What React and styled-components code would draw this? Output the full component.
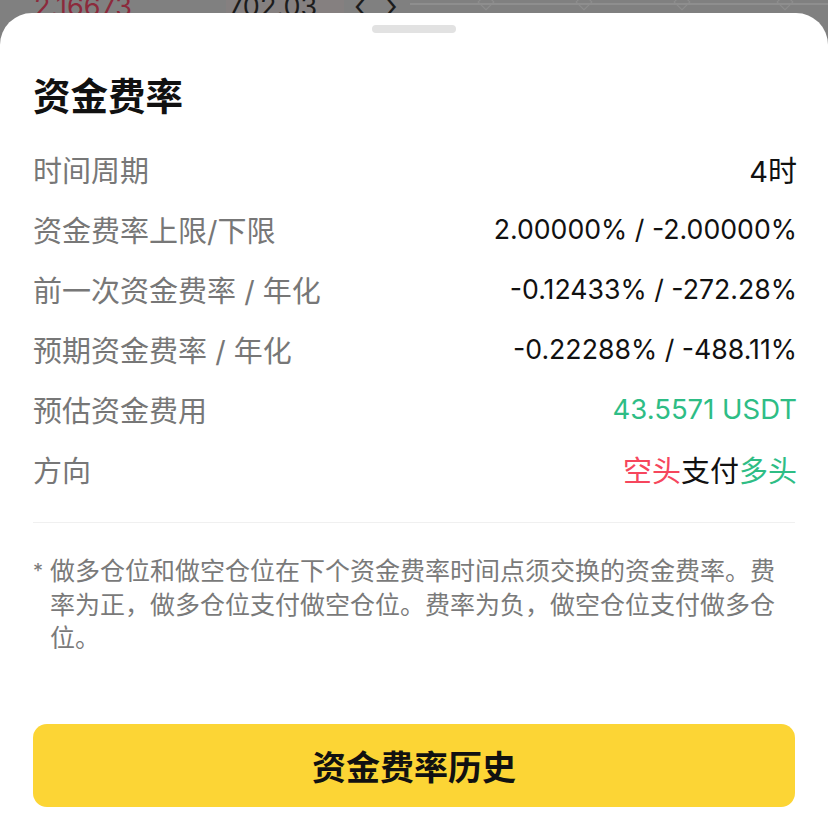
import styled, { createGlobalStyle } from "styled-components";

const GlobalStyle = createGlobalStyle`
  html, body {
    margin: 0;
    padding: 0;
    background: #808080;
  }
  body {
    font-family: Inter, "Noto Sans CJK SC", "Noto Sans", sans-serif;
    -webkit-font-smoothing: antialiased;
  }
`;

const rows = [
  { label: "时间周期", value: "4时", size: 29 },
  { label: "资金费率上限/下限", value: "2.00000% / -2.00000%" },
  { label: "前一次资金费率 / 年化", value: "-0.12433% / -272.28%" },
  { label: "预期资金费率 / 年化", value: "-0.22288% / -488.11%" },
  { label: "预估资金费用", value: "43.5571 USDT", tone: "green", size: 27.5 },
];

const toneColor = {
  green: "#2ebd85",
  red: "#f6465d",
  default: "#111111",
};

export default function App() {
  return (
    <>
      <GlobalStyle />
      <Screen>
        <Backdrop>
          <BackCell $w={226} $tone="red">2.16673</BackCell>
          <BackCell $w={118} $shade>702.03</BackCell>
          <Chevrons>‹ ›</Chevrons>
          <Track>
            {[476, 574, 672, 775].map((x) => (
              <Diamond key={x} style={{ left: x - 400 }} />
            ))}
          </Track>
        </Backdrop>

        <Sheet>
          <Handle />
          <Title>资金费率</Title>

          <Rows>
            {rows.map((r) => (
              <Row key={r.label}>
                <Label>{r.label}</Label>
                <Value $tone={r.tone} $size={r.size}>
                  {r.value}
                </Value>
              </Row>
            ))}
            <Row>
              <Label>方向</Label>
              <Value $size={29}>
                <Part $tone="red">空头</Part>
                支付
                <Part $tone="green">多头</Part>
              </Value>
            </Row>
          </Rows>

          <Divider />

          <Note>
            <Star>*</Star>
            <NoteText>
              做多仓位和做空仓位在下个资金费率时间点须交换的资金费率。费率为正，做多仓位支付做空仓位。费率为负，做空仓位支付做多仓位。
            </NoteText>
          </Note>

          <HistoryButton>资金费率历史</HistoryButton>
        </Sheet>
      </Screen>
    </>
  );
}

const Screen = styled.div`
  width: 828px;
  height: 828px;
  overflow: hidden;
  display: flex;
  flex-direction: column;
`;

const Backdrop = styled.div`
  height: 13px;
  flex-shrink: 0;
  display: flex;
  align-items: flex-end;
  overflow: hidden;
  background: #808080;
`;

const BackCell = styled.div`
  width: ${({ $w }) => $w}px;
  height: 13px;
  flex-shrink: 0;
  box-sizing: border-box;
  padding-left: ${({ $shade }) => ($shade ? 2 : 34)}px;
  background: ${({ $shade }) => ($shade ? "#858080" : "transparent")};
  color: ${({ $tone }) => ($tone === "red" ? "#8c2a3c" : "#1c1c1c")};
  font-size: 27px;
  line-height: 13px;
  display: flex;
  align-items: flex-end;
`;

const Chevrons = styled.div`
  width: 56px;
  height: 13px;
  color: #1c1c1c;
  font-size: 30px;
  line-height: 10px;
  letter-spacing: 6px;
  padding-left: 10px;
`;

const Track = styled.div`
  position: relative;
  flex: 1;
  height: 13px;

  &::before {
    content: "";
    position: absolute;
    left: 0;
    right: 0;
    top: 3px;
    height: 2px;
    background: #8e8e8e;
  }
`;

const Diamond = styled.span`
  position: absolute;
  top: -4px;
  width: 12px;
  height: 12px;
  margin-left: -6px;
  border: 1px solid #8e8e8e;
  transform: rotate(45deg);
  box-sizing: border-box;
`;

const Sheet = styled.div`
  flex: 1;
  background: #ffffff;
  border-radius: 32px 32px 0 0;
  padding: 0 33px;
  display: flex;
  flex-direction: column;
`;

const Handle = styled.div`
  align-self: center;
  width: 84px;
  height: 8px;
  margin-top: 12px;
  border-radius: 4px;
  background: #e2e2e2;
`;

const Title = styled.h1`
  margin: 42px 0 0;
  font-size: 37.5px;
  line-height: 44px;
  font-weight: 700;
  color: #111111;
`;

const Rows = styled.div`
  display: flex;
  flex-direction: column;
  margin-top: 20px;
`;

const Row = styled.div`
  height: 60px;
  display: flex;
  align-items: center;
  justify-content: space-between;
`;

const Label = styled.span`
  font-size: 29px;
  color: #777777;
`;

const Value = styled.span`
  margin-right: -2px;
  font-size: ${({ $size }) => $size || 26.7}px;
  color: ${({ $tone }) => toneColor[$tone || "default"]};
`;

const Part = styled.span`
  color: ${({ $tone }) => toneColor[$tone]};
`;

const Divider = styled.div`
  height: 1px;
  background: #f0f0f0;
  margin-top: 23px;
`;

const Note = styled.div`
  display: flex;
  margin-top: 32px;
  color: #7a7a7a;
  font-size: 25px;
  line-height: 33.5px;
`;

const Star = styled.span`
  width: 17px;
  flex-shrink: 0;
  font-size: 20px;
`;

const NoteText = styled.p`
  margin: 0;
  flex: 1;
`;

const HistoryButton = styled.button`
  margin-top: 68px;
  height: 83px;
  width: 100%;
  border: none;
  border-radius: 14px;
  background: #fcd535;
  color: #111111;
  font-family: inherit;
  font-size: 34px;
  font-weight: 700;
  cursor: pointer;
`;
